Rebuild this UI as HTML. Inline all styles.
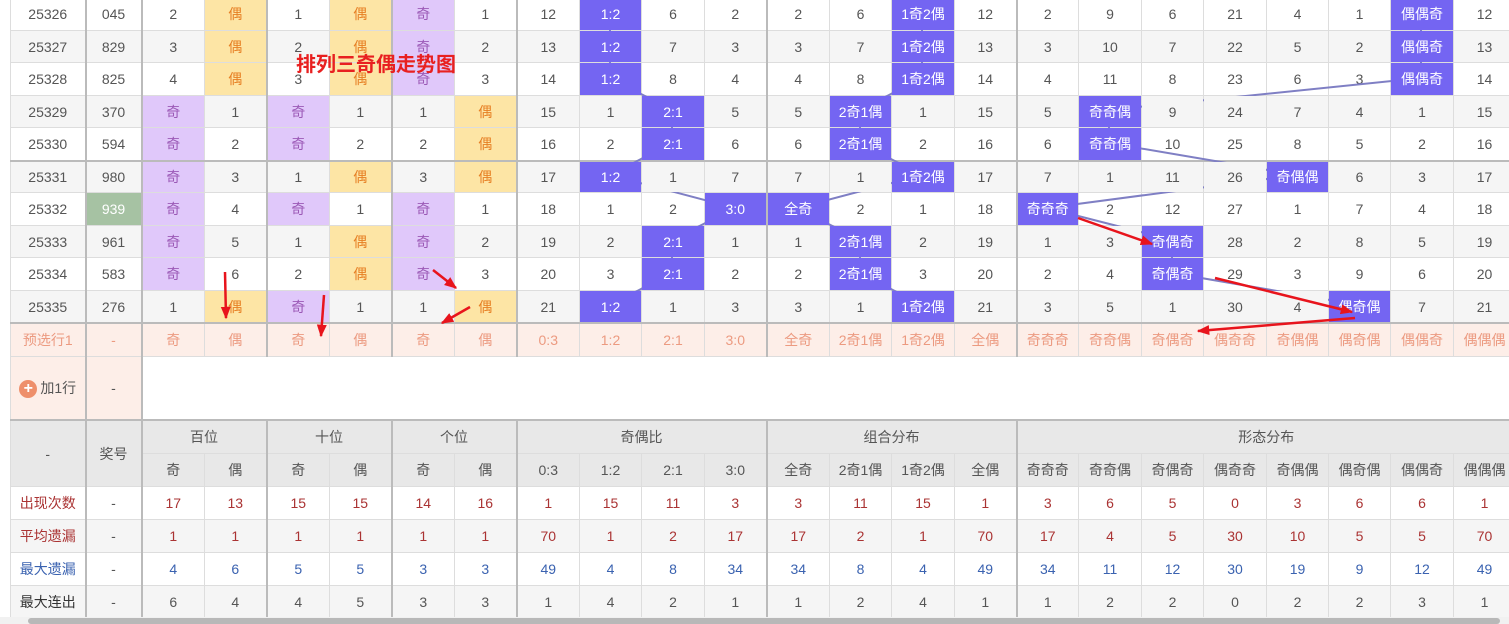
<!DOCTYPE html>
<html><head><meta charset="utf-8"><style>
body{margin:0;width:1509px;height:624px;overflow:hidden;background:#fff;font-family:"Liberation Sans","Noto Sans CJK SC",sans-serif;position:relative}
#wrap{position:absolute;left:10px;top:-3px;width:1499px;height:620px;overflow:hidden}
table{border-collapse:collapse;table-layout:fixed;width:1506px}
td{border:1px solid #ddd;text-align:center;font-size:14px;color:#555;padding:0;white-space:nowrap;overflow:hidden}
tr.a td{height:32px}tr.b td{height:31px}
tr.T.b td{height:30px}
tr.g td{background:#f5f5f5}
.p{background:#e0c8fa !important;color:#9b59b6 !important}
.y{background:#fde5a5 !important;color:#e67e22 !important}
.b{background:#7465f2 !important;color:#fff !important;position:relative;z-index:2;font-size:14px}
.L{border-left:2px solid #bbb !important}
.T td{border-top:2px solid #bbb}
tr.pre td{background:#fdeee8;color:#ec9a80;height:32px}
tr.add td{height:62px}
tr.add td.pk{background:#fdeee8;color:#555}
tr.h td{background:#e8e8e8;color:#555;height:32px}
tr.s td{height:32px}
tr.s.g td{background:#f5f5f5}
.r{color:#a33 !important}.bl{color:#3a62b0 !important}
.num{background:#a6c2a3 !important;color:#fff !important}
.plus{display:inline-block;width:18px;height:18px;border-radius:50%;background:#ee8f6b;color:#fff;font-size:16px;line-height:18px;vertical-align:middle;margin-right:3px;font-weight:bold}
svg{position:absolute;left:0;top:0;z-index:1;pointer-events:none}
#arr{z-index:3}
.title{position:absolute;left:296px;top:48px;font-size:20px;font-weight:bold;color:#e82020;z-index:4}
.sb{position:absolute;left:0;top:617px;width:1509px;height:7px;background:#f1f1f1}
.sb div{position:absolute;left:28px;top:1px;width:1472px;height:6px;border-radius:3px;background:#b8b8b8}
</style></head><body>
<div id="wrap">
<table>
<colgroup><col style="width:75px"><col style="width:56px"><col style="width:63px"><col style="width:62px"><col style="width:63px"><col style="width:62px"><col style="width:63px"><col style="width:62px"><col style="width:63px"><col style="width:62px"><col style="width:63px"><col style="width:62px"><col style="width:63px"><col style="width:62px"><col style="width:63px"><col style="width:62px"><col style="width:62px"><col style="width:63px"><col style="width:62px"><col style="width:63px"><col style="width:62px"><col style="width:62px"><col style="width:63px"><col style="width:62px"></colgroup>
<tr class="a"><td>25326</td><td class="L">045</td><td class="L">2</td><td class="y">偶</td><td class="L">1</td><td class="y">偶</td><td class="L p">奇</td><td>1</td><td class="L">12</td><td class="b">1:2</td><td>6</td><td>2</td><td class="L">2</td><td>6</td><td class="b">1奇2偶</td><td>12</td><td class="L">2</td><td>9</td><td>6</td><td>21</td><td>4</td><td>1</td><td class="b">偶偶奇</td><td>12</td></tr>
<tr class="b g"><td>25327</td><td class="L">829</td><td class="L">3</td><td class="y">偶</td><td class="L">2</td><td class="y">偶</td><td class="L p">奇</td><td>2</td><td class="L">13</td><td class="b">1:2</td><td>7</td><td>3</td><td class="L">3</td><td>7</td><td class="b">1奇2偶</td><td>13</td><td class="L">3</td><td>10</td><td>7</td><td>22</td><td>5</td><td>2</td><td class="b">偶偶奇</td><td>13</td></tr>
<tr class="a"><td>25328</td><td class="L">825</td><td class="L">4</td><td class="y">偶</td><td class="L">3</td><td class="y">偶</td><td class="L p">奇</td><td>3</td><td class="L">14</td><td class="b">1:2</td><td>8</td><td>4</td><td class="L">4</td><td>8</td><td class="b">1奇2偶</td><td>14</td><td class="L">4</td><td>11</td><td>8</td><td>23</td><td>6</td><td>3</td><td class="b">偶偶奇</td><td>14</td></tr>
<tr class="b g"><td>25329</td><td class="L">370</td><td class="L p">奇</td><td>1</td><td class="L p">奇</td><td>1</td><td class="L">1</td><td class="y">偶</td><td class="L">15</td><td>1</td><td class="b">2:1</td><td>5</td><td class="L">5</td><td class="b">2奇1偶</td><td>1</td><td>15</td><td class="L">5</td><td class="b">奇奇偶</td><td>9</td><td>24</td><td>7</td><td>4</td><td>1</td><td>15</td></tr>
<tr class="a"><td>25330</td><td class="L">594</td><td class="L p">奇</td><td>2</td><td class="L p">奇</td><td>2</td><td class="L">2</td><td class="y">偶</td><td class="L">16</td><td>2</td><td class="b">2:1</td><td>6</td><td class="L">6</td><td class="b">2奇1偶</td><td>2</td><td>16</td><td class="L">6</td><td class="b">奇奇偶</td><td>10</td><td>25</td><td>8</td><td>5</td><td>2</td><td>16</td></tr>
<tr class="b g T"><td>25331</td><td class="L">980</td><td class="L p">奇</td><td>3</td><td class="L">1</td><td class="y">偶</td><td class="L">3</td><td class="y">偶</td><td class="L">17</td><td class="b">1:2</td><td>1</td><td>7</td><td class="L">7</td><td>1</td><td class="b">1奇2偶</td><td>17</td><td class="L">7</td><td>1</td><td>11</td><td>26</td><td class="b">奇偶偶</td><td>6</td><td>3</td><td>17</td></tr>
<tr class="a"><td>25332</td><td class="L num">939</td><td class="L p">奇</td><td>4</td><td class="L p">奇</td><td>1</td><td class="L p">奇</td><td>1</td><td class="L">18</td><td>1</td><td>2</td><td class="b">3:0</td><td class="L b">全奇</td><td>2</td><td>1</td><td>18</td><td class="L b">奇奇奇</td><td>2</td><td>12</td><td>27</td><td>1</td><td>7</td><td>4</td><td>18</td></tr>
<tr class="b g"><td>25333</td><td class="L">961</td><td class="L p">奇</td><td>5</td><td class="L">1</td><td class="y">偶</td><td class="L p">奇</td><td>2</td><td class="L">19</td><td>2</td><td class="b">2:1</td><td>1</td><td class="L">1</td><td class="b">2奇1偶</td><td>2</td><td>19</td><td class="L">1</td><td>3</td><td class="b">奇偶奇</td><td>28</td><td>2</td><td>8</td><td>5</td><td>19</td></tr>
<tr class="a"><td>25334</td><td class="L">583</td><td class="L p">奇</td><td>6</td><td class="L">2</td><td class="y">偶</td><td class="L p">奇</td><td>3</td><td class="L">20</td><td>3</td><td class="b">2:1</td><td>2</td><td class="L">2</td><td class="b">2奇1偶</td><td>3</td><td>20</td><td class="L">2</td><td>4</td><td class="b">奇偶奇</td><td>29</td><td>3</td><td>9</td><td>6</td><td>20</td></tr>
<tr class="b g"><td>25335</td><td class="L">276</td><td class="L">1</td><td class="y">偶</td><td class="L p">奇</td><td>1</td><td class="L">1</td><td class="y">偶</td><td class="L">21</td><td class="b">1:2</td><td>1</td><td>3</td><td class="L">3</td><td>1</td><td class="b">1奇2偶</td><td>21</td><td class="L">3</td><td>5</td><td>1</td><td>30</td><td>4</td><td class="b">偶奇偶</td><td>7</td><td>21</td></tr>
<tr class="pre T"><td>预选行1</td><td class="L">-</td><td class="L">奇</td><td>偶</td><td class="L">奇</td><td>偶</td><td class="L">奇</td><td>偶</td><td class="L">0:3</td><td>1:2</td><td>2:1</td><td>3:0</td><td class="L">全奇</td><td>2奇1偶</td><td>1奇2偶</td><td>全偶</td><td class="L">奇奇奇</td><td>奇奇偶</td><td>奇偶奇</td><td>偶奇奇</td><td>奇偶偶</td><td>偶奇偶</td><td>偶偶奇</td><td>偶偶偶</td></tr>
<tr class="add"><td class="pk"><span class="plus">+</span>加1行</td><td class="pk L">-</td><td class="L" colspan="22"></td></tr>
<tr class="h T"><td rowspan="2">-</td><td rowspan="2" class="L">奖号</td><td colspan="2" class="L">百位</td><td colspan="2" class="L">十位</td><td colspan="2" class="L">个位</td><td colspan="4" class="L">奇偶比</td><td colspan="4" class="L">组合分布</td><td colspan="8" class="L">形态分布</td></tr>
<tr class="h"><td class="L">奇</td><td>偶</td><td class="L">奇</td><td>偶</td><td class="L">奇</td><td>偶</td><td class="L">0:3</td><td>1:2</td><td>2:1</td><td>3:0</td><td class="L">全奇</td><td>2奇1偶</td><td>1奇2偶</td><td>全偶</td><td class="L">奇奇奇</td><td>奇奇偶</td><td>奇偶奇</td><td>偶奇奇</td><td>奇偶偶</td><td>偶奇偶</td><td>偶偶奇</td><td>偶偶偶</td></tr>
<tr class="s"><td class="r">出现次数</td><td class="L">-</td><td class="L r">17</td><td class="r">13</td><td class="L r">15</td><td class="r">15</td><td class="L r">14</td><td class="r">16</td><td class="L r">1</td><td class="r">15</td><td class="r">11</td><td class="r">3</td><td class="L r">3</td><td class="r">11</td><td class="r">15</td><td class="r">1</td><td class="L r">3</td><td class="r">6</td><td class="r">5</td><td class="r">0</td><td class="r">3</td><td class="r">6</td><td class="r">6</td><td class="r">1</td></tr>
<tr class="s g"><td class="r">平均遗漏</td><td class="L">-</td><td class="L r">1</td><td class="r">1</td><td class="L r">1</td><td class="r">1</td><td class="L r">1</td><td class="r">1</td><td class="L r">70</td><td class="r">1</td><td class="r">2</td><td class="r">17</td><td class="L r">17</td><td class="r">2</td><td class="r">1</td><td class="r">70</td><td class="L r">17</td><td class="r">4</td><td class="r">5</td><td class="r">30</td><td class="r">10</td><td class="r">5</td><td class="r">5</td><td class="r">70</td></tr>
<tr class="s"><td class="bl">最大遗漏</td><td class="L">-</td><td class="L bl">4</td><td class="bl">6</td><td class="L bl">5</td><td class="bl">5</td><td class="L bl">3</td><td class="bl">3</td><td class="L bl">49</td><td class="bl">4</td><td class="bl">8</td><td class="bl">34</td><td class="L bl">34</td><td class="bl">8</td><td class="bl">4</td><td class="bl">49</td><td class="L bl">34</td><td class="bl">11</td><td class="bl">12</td><td class="bl">30</td><td class="bl">19</td><td class="bl">9</td><td class="bl">12</td><td class="bl">49</td></tr>
<tr class="s g"><td style="color:#333">最大连出</td><td class="L">-</td><td class="L">6</td><td>4</td><td class="L">4</td><td>5</td><td class="L">3</td><td>3</td><td class="L">1</td><td>4</td><td>2</td><td>1</td><td class="L">1</td><td>2</td><td>4</td><td>1</td><td class="L">1</td><td>2</td><td>2</td><td>0</td><td>2</td><td>2</td><td>3</td><td>1</td></tr>
</table>
</div>
<svg width="1509" height="624" viewBox="0 0 1509 624">
<g stroke="#7f7fc4" stroke-width="2" fill="none">
<polyline points="610,13 610,45 610,78 672,110 672,143 610,175 735,208 672,240 672,273 610,305"/>
<polyline points="922,13 922,45 922,78 860,110 860,143 922,175 797,208 860,240 860,273 922,305"/>
<polyline points="1421,13 1421,45 1421,78 1109,110 1109,143 1297,175 1047,208 1172,240 1172,273 1359,305"/>
</g></svg>
<svg id="arr" width="1509" height="624" viewBox="0 0 1509 624">
<defs><marker id="m" viewBox="0 0 10 10" refX="9" refY="5" markerWidth="5" markerHeight="5" orient="auto"><path d="M0,1 L10,5 L0,9 z" fill="#e8141c"/></marker></defs>
<g stroke="#e8141c" stroke-width="2.5" fill="none" marker-end="url(#m)">
<line x1="225" y1="272" x2="226" y2="318"/>
<line x1="324" y1="295" x2="321" y2="336"/>
<line x1="433" y1="270" x2="456" y2="288"/>
<line x1="470" y1="307" x2="442" y2="323"/>
<line x1="1078" y1="218" x2="1152" y2="244"/>
<line x1="1215" y1="278" x2="1352" y2="312"/>
<line x1="1355" y1="318" x2="1198" y2="331"/>
</g></svg>
<div class="title">排列三奇偶走势图</div>
<div class="sb"><div></div></div>
</body></html>
